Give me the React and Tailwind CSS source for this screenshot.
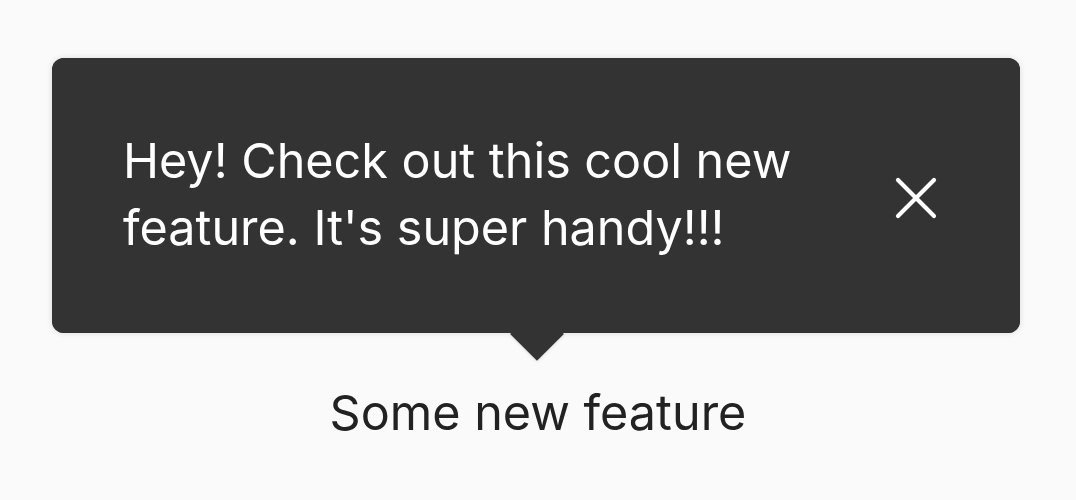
export default function App() {
  return (
    <div className="min-h-[500px] w-full bg-[#fafafa] pt-[58px] font-['Inter',sans-serif]">
      <div className="ml-[52px] flex w-[968px] flex-col items-center">
        <div className="relative w-full rounded-[12px] bg-[#333333] shadow-[0_0_6px_rgba(0,0,0,0.12)]">
          <div className="relative z-10 flex h-[275px] items-center justify-between rounded-[12px] bg-[#333333] pl-[71px] pr-[83px]">
            <p className="-mt-[3px] text-[48.5px] leading-[67px] text-white">
              Hey! Check out this cool new
              <br />
              feature. It's super handy!!!
            </p>
            <svg width="42" height="42" viewBox="0 0 42 42" className="mt-[5px]">
              <path d="M3 3 L39 39 M39 3 L3 39" stroke="white" strokeWidth="4.2" strokeLinecap="round" />
            </svg>
          </div>
          <div className="absolute bottom-[-20px] left-[calc(50%+1px)] h-[38px] w-[38px] -translate-x-1/2 rotate-45 bg-[#333333] shadow-[0_0_4px_rgba(0,0,0,0.18)]" />
        </div>
        <p className="mt-[51px] pl-[4px] text-[48.5px] leading-[58px] text-[#222222]">Some new feature</p>
      </div>
    </div>
  );
}
